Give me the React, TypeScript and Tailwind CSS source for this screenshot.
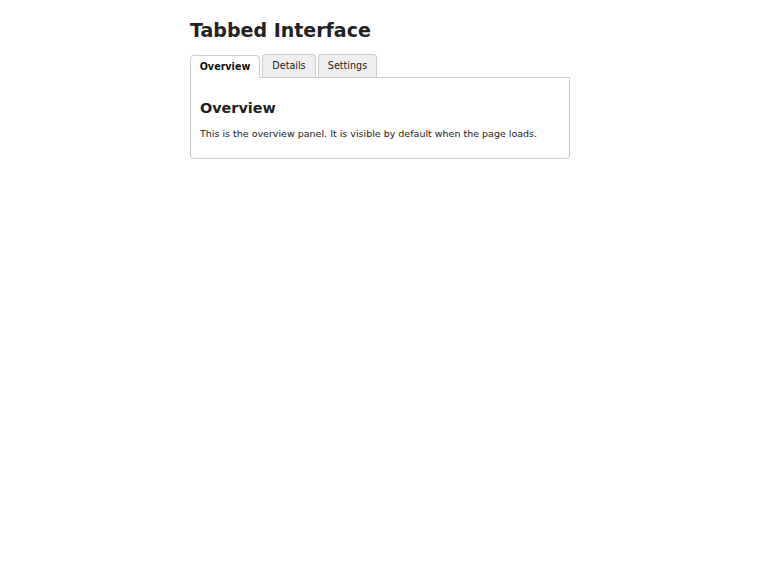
export default function App() {
  return (
    <div className="min-h-[570px] bg-white font-['DejaVu_Sans',sans-serif] text-[#222]">
      <div className="mx-auto w-[380px] pt-[18px]">
        <h1 className="text-[19px] font-bold leading-[24px] mb-[12px]">Tabbed Interface</h1>
        <div className="flex gap-[2px] items-start h-[23px]">
          <button className="relative top-[1px] z-10 w-[70px] h-[23px] bg-white border border-b-0 border-[#ccc] rounded-t-[4px] text-[9.6px] font-bold text-[#111] leading-[20px]">Overview</button>
          <button className="w-[54px] h-[23px] bg-[#eee] border border-b-0 border-[#ccc] rounded-t-[4px] text-[9.6px] text-[#222] leading-[20px]">Details</button>
          <button className="w-[59px] h-[23px] bg-[#eee] border border-b-0 border-[#ccc] rounded-t-[4px] text-[9.6px] text-[#222] leading-[20px]">Settings</button>
        </div>
        <div className="border border-[#ccc] rounded-b-[4px] px-[9px] pt-[20px] pb-[17px]">
          <h2 className="text-[14.4px] font-bold leading-[20px] mb-[9px]">Overview</h2>
          <p className="text-[9.5px] leading-[14px]">This is the overview panel. It is visible by default when the page loads.</p>
        </div>
      </div>
    </div>
  );
}
